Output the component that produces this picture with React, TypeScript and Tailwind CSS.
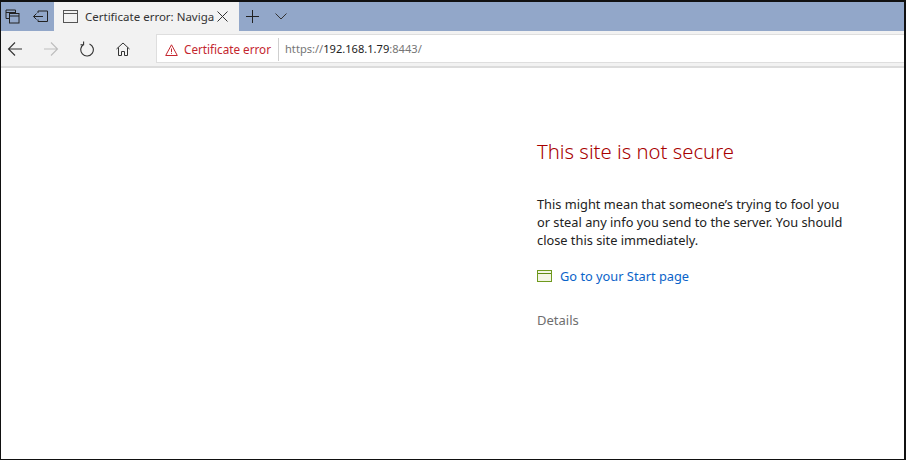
const font = "[font-family:'Noto_Sans',sans-serif]"

function ArrowIcon({ color, forward }: { color: string; forward?: boolean }) {
  return (
    <svg width="16" height="16" viewBox="0 0 16 16" fill="none" stroke={color} strokeWidth="1.1">
      <path d={forward ? 'M1 8h13.500M8 1.500 14.500 8 8 14.500' : 'M15 8H1.500M8 1.500 1.500 8 8 14.500'} />
    </svg>
  )
}

function TabBar() {
  return (
    <div className="flex h-[29px] shrink-0 bg-[#92a7c9]">
      <div className="flex w-[53px] items-center pl-[4px]">
        <svg width="15" height="15" viewBox="0 0 15 15" fill="none" stroke="#222" strokeWidth="1">
          <path d="M4.500 9.500h-3.500v-8.500h9.500v3.500" />
          <rect x="4.500" y="4.500" width="9.500" height="9.500" />
          <path d="M1 3.500h9.500M4.500 7h9.500" />
        </svg>
        <svg className="ml-[13px]" width="15" height="13" viewBox="0 0 15 13" fill="none" stroke="#222" strokeWidth="1">
          <path d="M5 3V1h9.500v10.500H5V9.500M10 6.500H.5M3.500 3.500l-3 3 3 3" />
        </svg>
      </div>
      <div className="flex w-[185px] items-center bg-[#f2f2f2] pl-[9px]">
        <svg width="15" height="13" viewBox="0 0 15 13" fill="none" stroke="#555" strokeWidth="1">
          <rect x="0.500" y="0.500" width="14" height="12" />
          <path d="M1 3.500h13" />
        </svg>
        <span className="ml-[7px] w-[123px] whitespace-nowrap text-[11.5px] text-[#333]">
          Certificate error: Naviga
        </span>
        <svg className="ml-[9px]" width="11" height="11" viewBox="0 0 11 11" fill="none" stroke="#333" strokeWidth="1">
          <path d="M.5.500l10 10M10.500.500l-10 10" />
        </svg>
      </div>
      <div className="flex items-center pl-[7px]">
        <svg width="13" height="13" viewBox="0 0 13 13" fill="none" stroke="#222" strokeWidth="1">
          <path d="M6.500 0v13M0 6.500h13" />
        </svg>
        <svg className="ml-[16px]" width="12" height="7" viewBox="0 0 12 7" fill="none" stroke="#333" strokeWidth="1">
          <path d="M.5.500 6 6l5.500-5.500" />
        </svg>
      </div>
    </div>
  )
}

function Toolbar() {
  return (
    <div className="flex h-[37px] shrink-0 border-b-2 border-[#dcdcdc] bg-[#f2f2f2]">
      <div className="flex w-[155px] items-center pl-[6px]">
        <ArrowIcon color="#333" />
        <span className="ml-[20px]">
          <ArrowIcon color="#bdbdbd" forward />
        </span>
        <svg className="ml-[21px]" width="14" height="16" viewBox="0 0 14 16" fill="none" stroke="#333" strokeWidth="1.1">
          <path d="M4 3.200A6.300 6.300 0 1 0 9.500 2.900M3.600.5v3.200H.5" />
        </svg>
        <svg className="ml-[22px]" width="14" height="14" viewBox="0 0 14 14" fill="none" stroke="#333" strokeWidth="1">
          <path d="M.5 7 7 1l6.500 6M2.500 5.500v8h3v-4h3v4h3v-8" />
        </svg>
      </div>
      <div className="mt-[3px] flex h-[29px] min-w-0 flex-1 items-center border border-r-0 border-[#dedede] bg-white pt-[2px] pl-[8px]">
        <svg width="13" height="12" viewBox="0 0 13 12" fill="none" stroke="#c4262e" strokeWidth="1">
          <path d="M6.500.8 12.300 11.500H.7ZM6.500 4.500v3.500M6.500 8.800v1" />
        </svg>
        <span className="ml-[6px] text-[11.7px] whitespace-nowrap text-[#c4262e]">Certificate error</span>
        <div className="ml-[7px] h-[23px] w-px bg-[#cfcfcf]" />
        <span className="ml-[6px] text-[11.1px] whitespace-nowrap text-[#767676]">
          https://<span className="text-[#222]">192.168.1.79</span>:8443/
        </span>
      </div>
    </div>
  )
}

export default function App() {
  return (
    <div className={`flex h-[460px] w-[906px] flex-col overflow-hidden border-t-2 border-r-2 border-b border-l border-[#111] bg-white ${font}`}>
      <TabBar />
      <Toolbar />
      <main className="flex-1 pt-[69px] pl-[536px]">
        <h1 className="text-[20.3px] leading-[28px] font-light text-[#a80000]">This site is not secure</h1>
        <p className="mt-[30px] w-[310px] text-[12.8px] leading-[18px] text-[#222]">
          This might mean that someone’s trying to fool you or steal any info you send to the server. You should close this site immediately.
        </p>
        <div className="mt-[18px] flex items-center">
          <svg width="15" height="12" viewBox="0 0 15 12" fill="#f3f5e4" stroke="#6f9a1e" strokeWidth="1">
            <rect x="0.500" y="0.500" width="14" height="11" />
            <path d="M1 3.500h13" stroke="#5f8a10" />
          </svg>
          <span className="ml-[8px] text-[12.8px] leading-[18px] text-[#0a63c9]">Go to your Start page</span>
        </div>
        <div className="mt-[26px] text-[13px] leading-[18px] text-[#6e6e6e]">Details</div>
      </main>
    </div>
  )
}
